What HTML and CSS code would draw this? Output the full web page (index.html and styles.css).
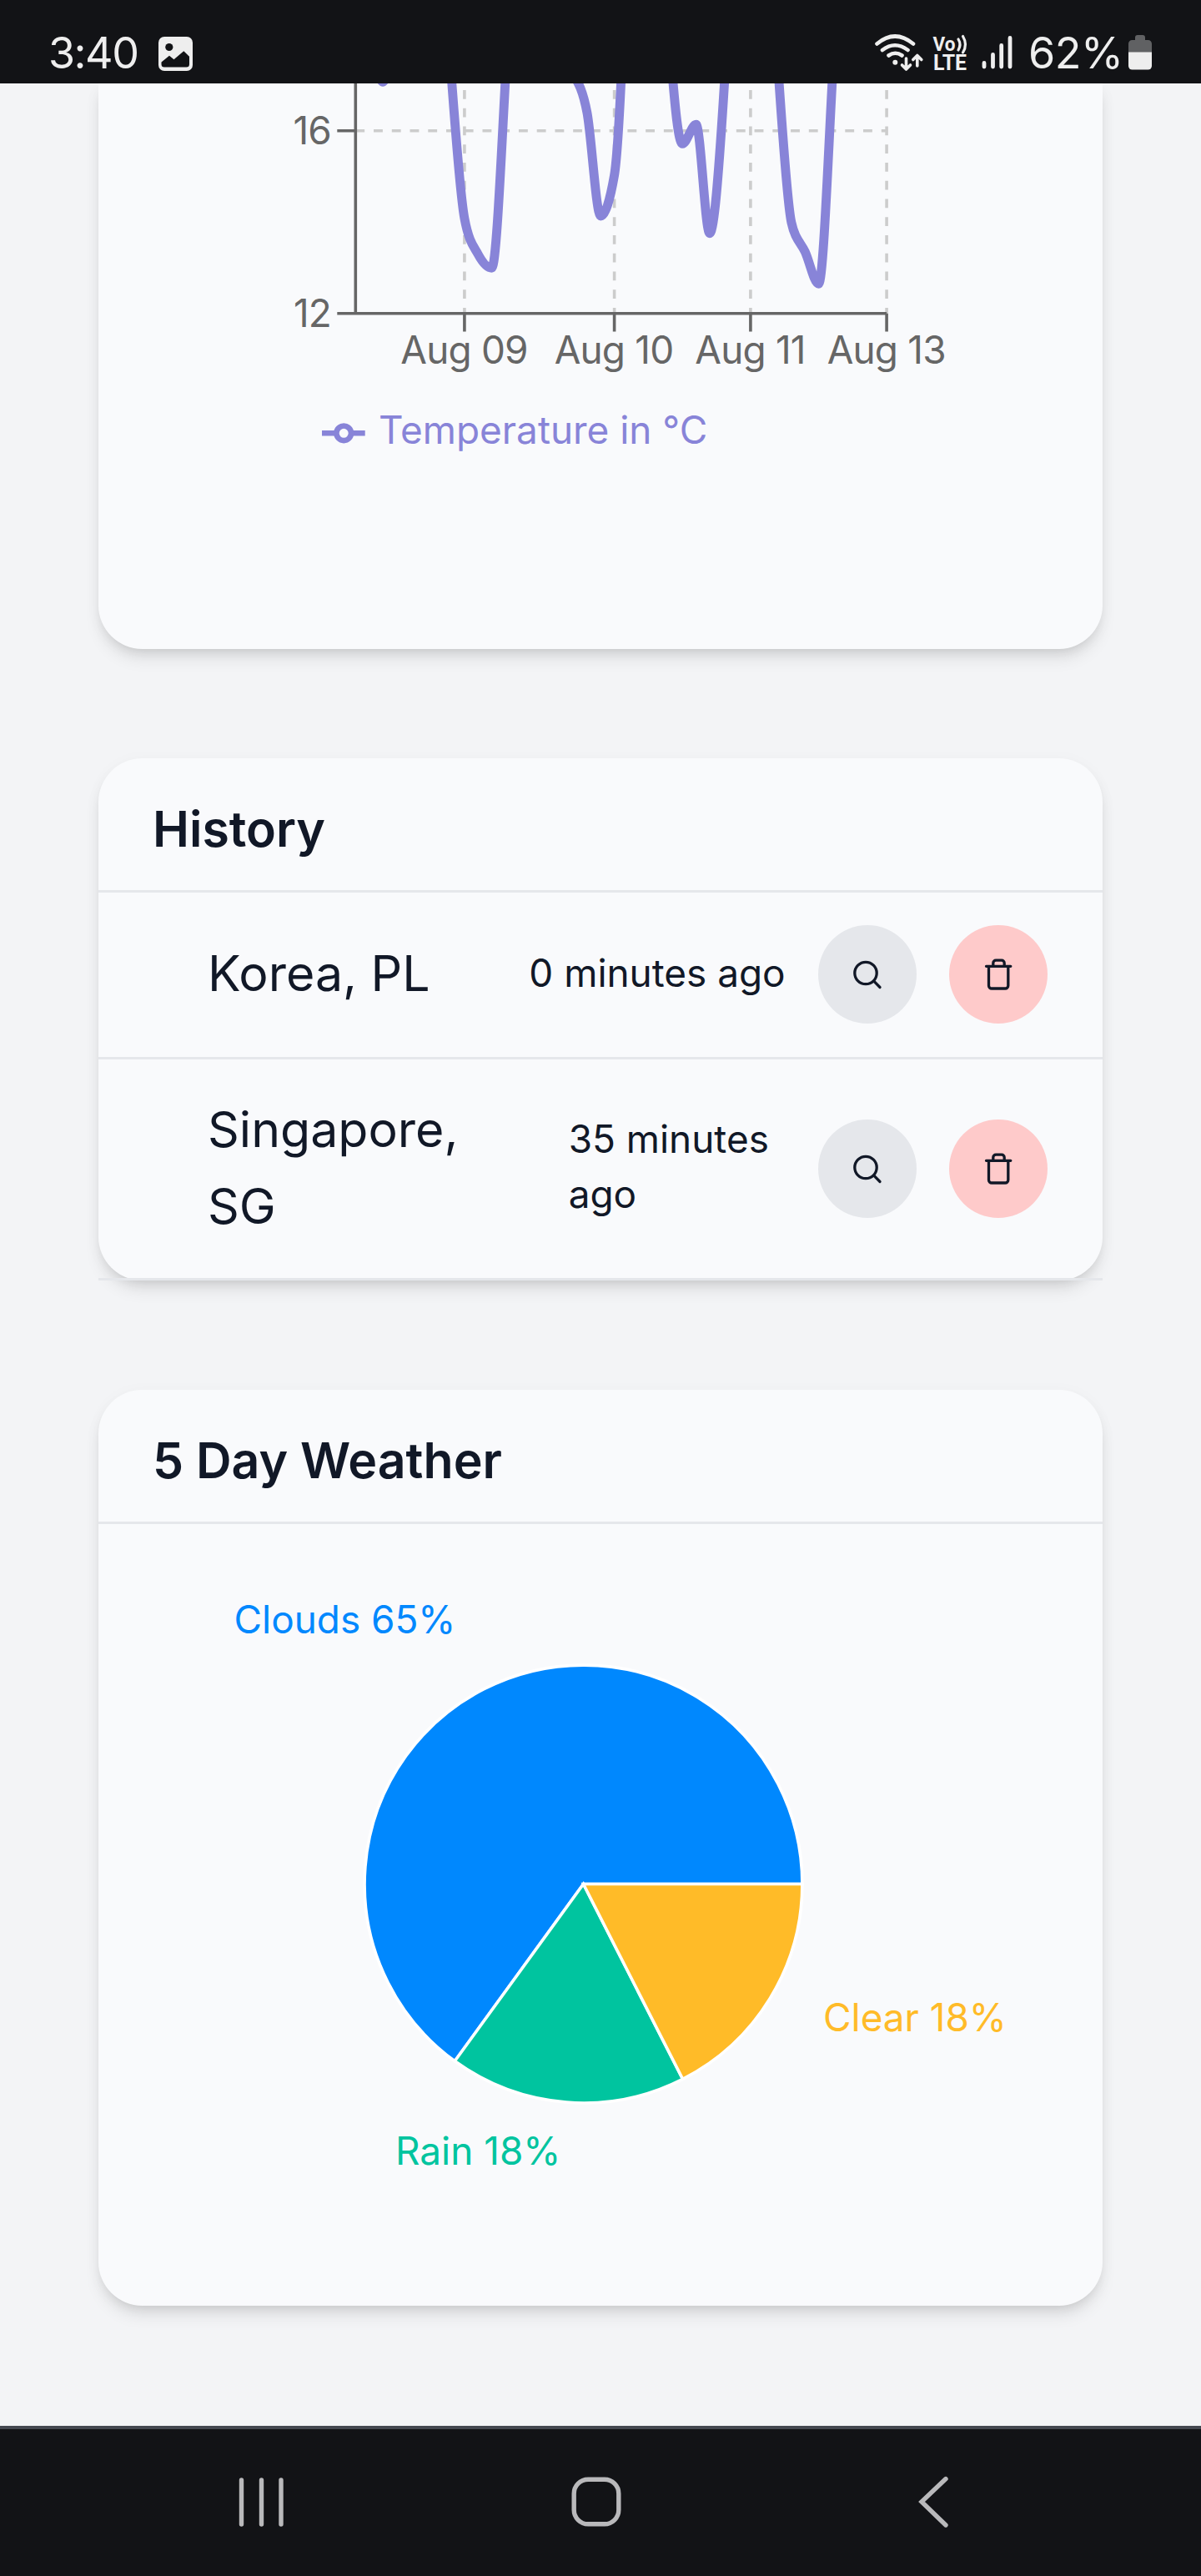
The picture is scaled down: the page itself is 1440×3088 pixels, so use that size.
FILE: index.html
```html
<!DOCTYPE html>
<html lang="en">
<head>
<meta charset="utf-8">
<title>Weather</title>
<link rel="stylesheet" href="styles.css">
</head>
<body>
<header class="status">
  <div class="status-group">
    <span class="clock">3:40</span>
    <svg class="ico-picture" width="41" height="41" viewBox="0 0 41 41"><rect width="41" height="41" rx="7" fill="#eee"/><circle cx="12.8" cy="12.5" r="4.6" fill="#121316"/><path d="M3.5 30.5 13 22.8 18.5 27.2 30.3 17.2 37 23.8V33a3.5 3.5 0 0 1-3.5 3.5H7A3.5 3.5 0 0 1 3.5 33Z" fill="#121316"/></svg>
  </div>
  <div class="status-group">
    <svg width="175" height="54" viewBox="1045 38 175 54" fill="none" stroke="#eee" stroke-linecap="round">
      <path d="M1051.500 52.500Q1073 34.500 1095 52.500M1058 60Q1073 48.500 1088.500 60M1065.500 66.500Q1073.500 61 1081.500 66.500" stroke-width="4.600"/>
      <circle cx="1073.300" cy="74.800" r="3" fill="#eee" stroke="none"/>
      <path d="M1086.500 70V82.500M1081.500 78 1086.500 83 1091.500 78M1099.800 79V67M1094.800 71.500 1099.800 66.500 1104.800 71.500" stroke-width="3.600" stroke-linejoin="round"/>
      <g fill="#eee" stroke="none" class="volte"><text x="1118.500" y="60.700" class="volte-top" textLength="27" lengthAdjust="spacingAndGlyphs">Vo</text><text x="1119" y="84.300" textLength="40" lengthAdjust="spacingAndGlyphs">LTE</text></g>
      <path d="M1149 47Q1153 53.500 1149 60M1154.500 43.500Q1160.500 53.500 1154.500 63" stroke-width="3.200"/>
      <path d="M1180 75.500V80M1190.500 65.500V80M1200.700 54.500V80M1211 45.500V80" stroke-width="4.800"/>
    </svg>
    <span class="battery-level">62%</span>
    <svg class="battery" width="28" height="42" viewBox="0 0 28 42"><path d="M8 3a3 3 0 0 1 3-3h6a3 3 0 0 1 3 3v3h3.500A4.500 4.500 0 0 1 28 10.500V21H0V10.500A4.500 4.500 0 0 1 4.500 6H8Z" fill="#606163"/><path d="M0 20.500H28V37a4.500 4.500 0 0 1-4.500 4.500h-19A4.500 4.500 0 0 1 0 37Z" fill="#eee"/></svg>
  </div>
</header>

<main class="page">
  <section class="card card-chart">
    <svg class="chart" width="1204" height="678" viewBox="118 100 1204 678">
      <g class="grid">
        <path d="M426.300 156.800H1063"/>
        <path d="M556.900 108V375.700M736.600 108V375.700M899.900 108V375.700M1063.100 108V375.700"/>
      </g>
      <g class="axis">
        <path d="M426.300 100V375.700M404.300 375.700H1063.100M404.300 156.800H426.300"/>
        <path d="M556.900 375.700V397.400M736.600 375.700V397.400M899.900 375.700V397.400M1063.100 375.700V397.400"/>
      </g>
      <g class="tick-y"><text x="397" y="173">16</text><text x="397" y="392">12</text></g>
      <g class="tick-x"><text x="556.500" y="436">Aug 09</text><text x="736" y="436">Aug 10</text><text x="899.500" y="436">Aug 11</text><text x="1062.700" y="436">Aug 13</text></g>
      <path class="series" d="M442.600 60C448 60 453.500 98.200 459 98.200S470 60 475.300 60M540.600 84C546 154.700 551.500 232.900 556.900 261.700C562.300 290.500 567.900 295 573.300 305C578.700 315 584.200 321.300 589.600 321.300C595 321.300 600.500 195 605.900 97L607 75M687.600 90C693 98.700 698.500 106.700 703.900 135C709.300 163.300 714.800 259 720.200 259C725.600 259 731.200 241 736.600 210C739.300 194 743.300 126.700 745 90M805.300 80C808 110 812.700 172.400 818.200 172.400C823.600 172.400 829.100 149.300 834.600 149.300C840 149.300 845.500 279.700 850.900 279.700C856.300 279.700 861.800 205 867.200 121.700L869.800 80M932.500 77C938 153 943.500 242.700 948.900 266.700C953.300 287 959.800 290.300 965.200 301.700C970.600 313.100 976.100 340.300 981.500 340.300C987 340.300 992.500 195 997.900 97L999 75"/>
      <g class="legend"><path d="M386 519.300H403.500M421 519.300H437.700"/><circle cx="412.200" cy="519.300" r="8.800"/><text x="454" y="532">Temperature in °C</text></g>
    </svg>
  </section>

  <section class="card">
    <h2 class="card-title">History</h2>
    <ul class="history">
      <li class="entry">
        <span class="city">Korea, PL</span>
        <span class="ago">0 minutes ago</span>
        <button class="btn" aria-label="Search"><svg width="40" height="40" viewBox="0 0 40 40"><circle cx="18" cy="18.500" r="13.200"/><path d="M28 28.300 35 35.500"/></svg></button>
        <button class="btn btn-delete" aria-label="Delete"><svg width="40" height="40" viewBox="0 0 40 40"><path d="M5.500 10.300H34.800M8.500 10.300V33.500a3.500 3.500 0 0 0 3.500 3.500H28.300a3.500 3.500 0 0 0 3.500-3.500V10.300M13.800 10V6.500a3.300 3.300 0 0 1 3.300-3.300H23.900a3.300 3.300 0 0 1 3.300 3.300V10"/></svg></button>
      </li>
      <li class="entry">
        <span class="city">Singapore, SG</span>
        <span class="ago ago-wrap">35 minutes ago</span>
        <button class="btn" aria-label="Search"><svg width="40" height="40" viewBox="0 0 40 40"><circle cx="18" cy="18.500" r="13.200"/><path d="M28 28.300 35 35.500"/></svg></button>
        <button class="btn btn-delete" aria-label="Delete"><svg width="40" height="40" viewBox="0 0 40 40"><path d="M5.500 10.300H34.800M8.500 10.300V33.500a3.500 3.500 0 0 0 3.500 3.500H28.300a3.500 3.500 0 0 0 3.500-3.500V10.300M13.800 10V6.500a3.300 3.300 0 0 1 3.300-3.300H23.900a3.300 3.300 0 0 1 3.300 3.300V10"/></svg></button>
      </li>
    </ul>
  </section>

  <section class="card card-pie">
    <h2 class="card-title">5 Day Weather</h2>
    <svg class="chart" width="1204" height="936" viewBox="118 1827 1204 936">
      <g class="pie">
        <path fill="#0088fe" d="M699.500 2258.500H961.900A262.400 262.400 0 1 0 545.300 2470.800Z"/>
        <path fill="#00c49f" d="M699.500 2258.500L545.300 2470.800A262.400 262.400 0 0 0 818.600 2492.300Z"/>
        <path fill="#ffbb28" d="M699.500 2258.500L818.600 2492.300A262.400 262.400 0 0 0 961.900 2258.500Z"/>
      </g>
      <text x="280.500" y="1957.500" fill="#0088fe">Clouds 65%</text>
      <text x="474" y="2594.500" fill="#00c49f">Rain 18%</text>
      <text x="987" y="2434.500" fill="#ffbb28">Clear 18%</text>
    </svg>
  </section>
</main>

<nav class="navbar">
  <svg width="60" height="64" viewBox="0 0 60 64"><path d="M6.500 6V59M30.500 6V59M54 6V59"/></svg>
  <svg width="64" height="64" viewBox="0 0 64 64"><rect x="5.200" y="5.200" width="53.600" height="53.600" rx="17"/></svg>
  <svg width="44" height="64" viewBox="0 0 44 64"><path d="M37 4.500 8 32 37 60"/></svg>
</nav>
</body>
</html>
```
FILE: styles.css
```css
* { box-sizing: border-box; }
body {
  margin: 0;
  width: 1440px;
  height: 3088px;
  display: flex;
  flex-direction: column;
  overflow: hidden;
  background: #f3f4f6;
  color: #111827;
  font-family: Inter, "Liberation Sans", sans-serif;
}
svg { display: block; flex: none; }

.status {
  height: 100px;
  flex: none;
  position: relative;
  z-index: 1;
  display: flex;
  justify-content: space-between;
  padding: 0 59px 0 58px;
  background: #121316;
  color: #eee;
}
.status-group { display: flex; align-items: flex-start; padding-top: 38px; }
.clock, .battery-level { font-size: 52px; line-height: 52px; }
.clock { letter-spacing: -1.5px; width: 132px; }
.ico-picture { margin-top: 6px; }
.battery-level { width: 121px; padding-left: 13px; letter-spacing: -0.5px; }
.battery { margin: 4px 0 0 12px; }
.volte { font: 700 25px Roboto, sans-serif; }
.volte-top { font-size: 23px; }

.page {
  flex: 1;
  min-height: 0;
  display: flex;
  flex-direction: column;
  gap: 131px;
  padding: 0 118px;
}
.card {
  flex: none;
  border-radius: 52.5px;
  background: #f9fafc;
  box-shadow: 0 13px 20px -3px rgba(0, 0, 0, .1), 0 7px 13px -7px rgba(0, 0, 0, .1), 0 3px 20px rgba(0, 0, 0, .03);
}
.card-chart { height: 678px; border-radius: 0 0 52.5px 52.5px; }
.card-pie { height: 1098px; }
.card-title {
  margin: 0;
  height: 161px;
  padding: 39px 65px 0;
  border-bottom: 3px solid #e5e7eb;
  font-size: 59px;
  font-weight: 600;
  line-height: 92px;
}

.chart text { font-size: 45.900px; }
.grid { fill: none; stroke: #ccc; stroke-width: 3.600; stroke-dasharray: 10.870; }
.axis { fill: none; stroke: #666; stroke-width: 3.600; }
.tick-x, .tick-y { fill: #666; letter-spacing: -0.800px; }
.tick-x { text-anchor: middle; }
.tick-y { text-anchor: end; }
.series { fill: none; stroke: #8884d8; stroke-width: 10.900; }
.legend { fill: none; stroke: #8884d8; stroke-width: 6.600; }
.legend text { fill: #8884d8; stroke: none; }
.pie { stroke: #fff; stroke-width: 3.600; }

.history { margin: 0; padding: 0; list-style: none; }
.entry {
  display: flex;
  align-items: center;
  gap: 39.400px;
  padding: 38.500px 65.600px 39.500px 131px;
  border-bottom: 3px solid #e5e7eb;
  height: 200px;
}
.entry + .entry { height: 265px; }
.city { width: 310px; margin-right: auto; padding-bottom: 2px; font-size: 59px; line-height: 91.800px; }
.ago { padding-bottom: 3px; font-size: 45.900px; line-height: 65.600px; white-space: nowrap; }
.ago-wrap { width: 260px; white-space: normal; }
.btn {
  width: 118px;
  height: 118px;
  flex: none;
  display: flex;
  align-items: center;
  justify-content: center;
  padding: 0;
  border: 0;
  border-radius: 50%;
  background: #e5e7eb;
}
.btn-delete { background: #fecaca; }
.btn svg { fill: none; stroke: #111827; stroke-width: 3.300; stroke-linecap: round; }

.navbar {
  height: 180px;
  flex: none;
  display: flex;
  align-items: flex-start;
  justify-content: space-between;
  padding: 55px 299px 0 283px;
  border-top: 4px solid #444850;
  background: #121316;
}
.navbar svg { fill: none; stroke: #b9b9bb; stroke-width: 5.400; stroke-linecap: round; }
.navbar svg:nth-child(2) { margin-right: 10px; }
```
